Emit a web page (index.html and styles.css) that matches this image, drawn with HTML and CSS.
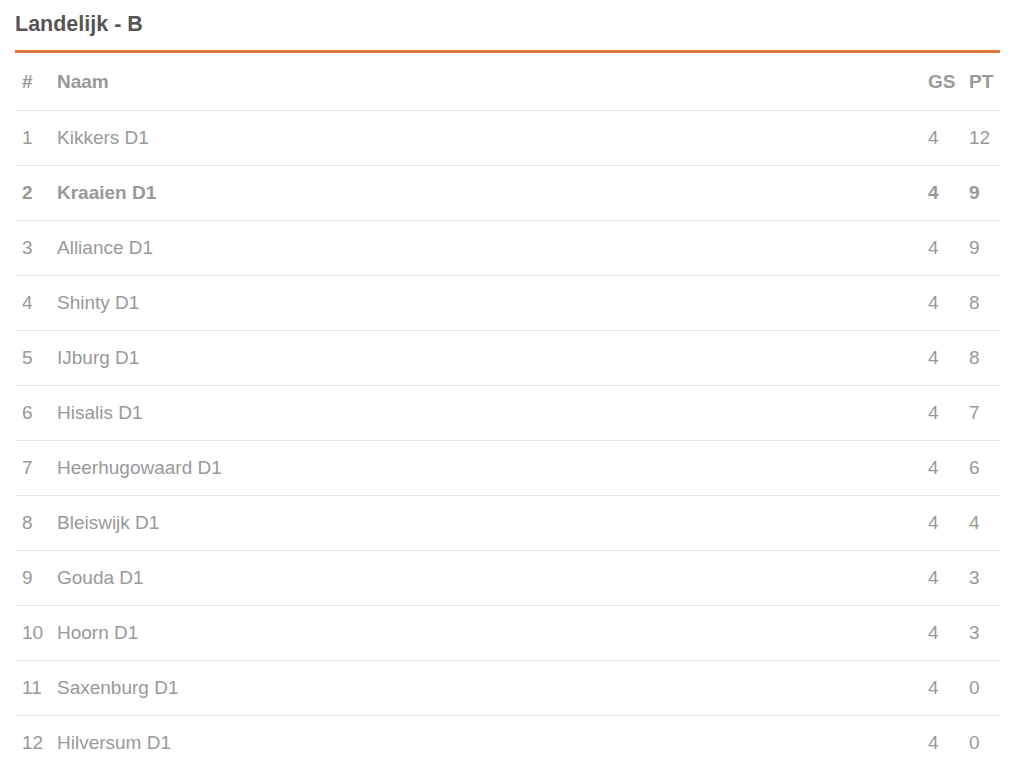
FILE: index.html
```html
<!DOCTYPE html>
<html lang="nl">
<head>
<meta charset="utf-8">
<title>Landelijk - B</title>
<link rel="stylesheet" href="styles.css">
</head>
<body>
<div class="standings">
  <h2 class="title">Landelijk - B</h2>
  <div class="table">
    <div class="row head"><span>#</span><span>Naam</span><span>GS</span><span>PT</span></div>
    <div class="row"><span>1</span><span>Kikkers D1</span><span>4</span><span>12</span></div>
    <div class="row own"><span>2</span><span>Kraaien D1</span><span>4</span><span>9</span></div>
    <div class="row"><span>3</span><span>Alliance D1</span><span>4</span><span>9</span></div>
    <div class="row"><span>4</span><span>Shinty D1</span><span>4</span><span>8</span></div>
    <div class="row"><span>5</span><span>IJburg D1</span><span>4</span><span>8</span></div>
    <div class="row"><span>6</span><span>Hisalis D1</span><span>4</span><span>7</span></div>
    <div class="row"><span>7</span><span>Heerhugowaard D1</span><span>4</span><span>6</span></div>
    <div class="row"><span>8</span><span>Bleiswijk D1</span><span>4</span><span>4</span></div>
    <div class="row"><span>9</span><span>Gouda D1</span><span>4</span><span>3</span></div>
    <div class="row"><span>10</span><span>Hoorn D1</span><span>4</span><span>3</span></div>
    <div class="row"><span>11</span><span>Saxenburg D1</span><span>4</span><span>0</span></div>
    <div class="row"><span>12</span><span>Hilversum D1</span><span>4</span><span>0</span></div>
  </div>
</div>
</body>
</html>
```
FILE: styles.css
```css
html, body {
  margin: 0;
  padding: 0;
  background: #fff;
}
body {
  font-family: "Liberation Sans", Arial, Helvetica, sans-serif;
  color: #999;
}
.standings {
  margin: 0 24px 0 15px;
}
.title {
  margin: 0;
  box-sizing: border-box;
  height: 53px;
  padding-top: 11px;
  font-size: 21.5px;
  line-height: 26px;
  font-weight: bold;
  color: #555;
  border-bottom: 3px solid #e07838;
}
.row {
  display: grid;
  grid-template-columns: 35px 1fr 41px 38px;
  align-items: center;
  height: 55px;
  box-sizing: border-box;
  border-top: 1px solid #e8e8e8;
  font-size: 19px;
}
.row span {
  padding: 0 7px;
  white-space: nowrap;
}
.row.head {
  border-top: none;
  height: 57px;
  font-weight: bold;
}
.row.own {
  font-weight: bold;
}
```
